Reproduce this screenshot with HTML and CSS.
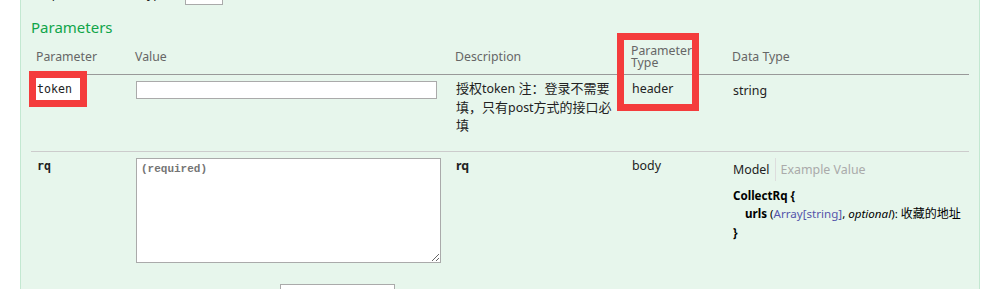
FILE: index.html
```html
<!DOCTYPE html>
<html lang="zh">
<head>
<meta charset="utf-8">
<title>Parameters</title>
<link rel="stylesheet" href="styles.css">
</head>
<body>
<div class="panel">
  <div class="ctype">
    <label class="ctype-label">Response Content Type</label>
    <span class="ctype-select"></span>
  </div>
  <h4 class="heading">Parameters</h4>
  <table class="params">
    <colgroup>
      <col class="c-name"><col class="c-value"><col class="c-desc"><col class="c-ptype"><col class="c-dtype">
    </colgroup>
    <thead>
      <tr>
        <th>Parameter</th>
        <th>Value</th>
        <th>Description</th>
        <th><span class="mark mark-ptype"></span>Parameter<br>Type</th>
        <th>Data Type</th>
      </tr>
    </thead>
    <tbody>
      <tr class="row-first">
        <td class="code"><span class="mark mark-token"></span><label class="pname-label">token</label></td>
        <td><input class="text-input" type="text"></td>
        <td class="markdown"><p><span class="zh">授权</span>token <span class="zh">注：登录不需要填，只有</span>post<span class="zh">方式的接口必填</span></p></td>
        <td>header</td>
        <td class="dtype-simple">string</td>
      </tr>
      <tr class="row-last">
        <td class="code required">rq</td>
        <td>
          <textarea class="body-textarea" placeholder="(required)"></textarea>
          <div class="pct">
            <label class="pct-label">Parameter content type:</label>
            <span class="pct-select">application/json</span>
          </div>
        </td>
        <td class="markdown"><strong>rq</strong></td>
        <td>body</td>
        <td>
          <ul class="sig-tabs">
            <li class="tab tab-on">Model</li>
            <li class="tab tab-off">Example Value</li>
          </ul>
          <div class="model">
            <div class="strong">CollectRq {</div>
            <div class="prop"><span class="prop-name">urls</span> (<span class="prop-type">Array[string]</span>, <span class="prop-opt">optional</span>): <span class="zh-s">收藏的地址</span></div>
            <div class="strong">}</div>
          </div>
        </td>
      </tr>
    </tbody>
  </table>
</div>
</body>
</html>
```
FILE: styles.css
```css
* { box-sizing: border-box; }
html, body { margin: 0; padding: 0; background: #fff; }
body {
  font-family: "Noto Sans", "Noto Sans CJK SC", sans-serif;
  font-size: 12.4px;
  color: #222;
}
.zh { font-size: 13px; line-height: 1; font-family: "Noto Sans CJK SC", sans-serif; }
.zh-s { font-size: 12px; line-height: 1; font-family: "Noto Sans CJK SC", sans-serif; }

.panel {
  position: relative;
  display: flow-root;
  margin: 0 11px 0 20px;
  padding: 0 10px 30px;
  background: #e7f6ec;
  border-left: 1px solid #c3e8d1;
  border-right: 1px solid #c3e8d1;
}

.ctype {
  display: flex;
  align-items: flex-end;
  height: 21px;
  margin-top: -16px;
}
.ctype-label { line-height: 16px; margin-bottom: 3px; width: 154px; color: #222; }
.ctype-select {
  width: 38px; height: 21px;
  background: #fff;
  border: 1px solid #aaa;
}

.heading {
  margin: 12px 0 3px;
  font-size: 15px;
  line-height: 20px;
  font-weight: normal;
  color: #10a54a;
}

.params {
  width: 100%;
  border-collapse: collapse;
  table-layout: fixed;
}
.c-name { width: 99px; }
.c-value { width: 320px; }
.c-desc { width: 176px; }
.c-ptype { width: 101px; }
.c-dtype { width: 242px; }

.params th {
  padding: 5px;
  font-size: 12.3px;
  line-height: 12px;
  font-weight: normal;
  color: #666;
  text-align: left;
  vertical-align: middle;
  border-bottom: 1px solid #999;
}
.params td {
  padding: 6px;
  line-height: 16px;
  vertical-align: top;
  border-bottom: 1px solid #ccc;
}
.params .row-last td { border-bottom: none; }

.code { font-family: "DejaVu Sans Mono", monospace; font-size: 11.6px; }
.pname-label { position: relative; z-index: 1; }
.required { font-weight: bold; }

.mark {
  position: absolute;
  border: 7px solid #f43c3c;
}
.mark-token { left: 8px; top: 71px; width: 58px; height: 36px; background: #fff; }
.mark-ptype { left: 596px; top: 33px; width: 82px; height: 78px; }

.text-input {
  display: block;
  width: 301px; height: 18px;
  margin: 0;
  border: 1px solid #aaa;
  background: #fff;
  padding: 0 3px;
}

.markdown p { margin: -1px 0 9px; line-height: 18.5px; }
.markdown strong { font-weight: bold; }

.dtype-simple { padding-top: 8px !important; }

.body-textarea {
  display: block;
  width: 305px; height: 105px;
  margin: 0;
  padding: 4px 4px;
  border: 1px solid #aaa;
  background: #fff;
  font-family: "Liberation Mono", monospace;
  font-size: 11px;
  font-weight: bold;
  resize: both;
}
.body-textarea::placeholder { color: #757575; }

.pct {
  display: flex;
  align-items: flex-start;
  gap: 4px;
  margin-top: 21px;
}
.pct-label { width: 140px; margin-top: 10px; }
.pct-select {
  display: block;
  width: 115px; height: 22px;
  padding: 0 4px;
  line-height: 20px;
  background: #fff;
  border: 1px solid #aaa;
}

.sig-tabs {
  display: flex;
  margin: 0;
  padding: 0;
  list-style: none;
  line-height: 23px;
}
.tab-on { color: #222; padding-right: 5px; border-right: 1px solid #ddd; }
.tab-off { color: #aaa; padding-left: 5px; }

.model {
  margin-top: 6px;
  font-size: 11.6px;
  line-height: 18.5px;
  color: #000;
}
.model .strong { font-weight: bold; }
.prop { margin-left: 12px; }
.prop-name { font-weight: bold; }
.prop-type { color: #55a; }
.prop-opt { font-style: italic; }
```
